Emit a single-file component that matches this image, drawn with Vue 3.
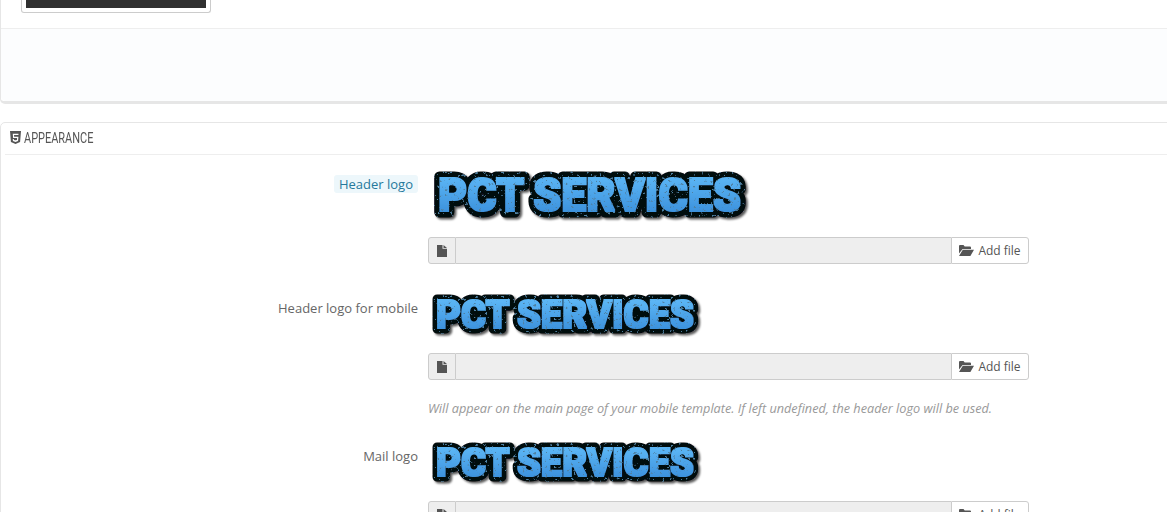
<script setup>
const rows = [
  { label: 'Header logo', active: true, w: 330, h: 56, font: 47, tx: 10, tw: 303, base: 42, sw: 11, help: '' },
  { label: 'Header logo for mobile', active: false, w: 280, h: 48, font: 38, tx: 8, tw: 258, base: 35, sw: 9, help: 'Will appear on the main page of your mobile template. If left undefined, the header logo will be used.' },
  { label: 'Mail logo', active: false, w: 281, h: 48, font: 38, tx: 8, tw: 258, base: 35, sw: 9, help: '' }
]
</script>

<template>
  <div class="page">
    <section class="panel first">
      <div class="body-top">
        <div class="thumb"><div class="thumb-img"></div></div>
      </div>
      <div class="panel-foot"></div>
    </section>
    <section class="panel second">
      <h3 class="heading">
        <svg class="h5" viewBox="0 0 12 14" aria-hidden="true">
          <path fill-rule="evenodd" d="M0 0h12l-1 11.800L6 14l-5-2.200zM3 3l.4 4.600h4.300l-.1 2L6 10.100l-1.700-.5-.1-1H3l.2 2.300 2.800.9 2.800-.9.4-4.700H4.500l-.1-1.800h4.800L9.300 3z" />
        </svg>
        <span class="heading-text">APPEARANCE</span>
      </h3>
      <div class="form">
        <div v-for="r in rows" :key="r.label" class="row">
          <div class="label-col"><span class="label" :class="{ active: r.active }">{{ r.label }}</span></div>
          <div class="field">
            <svg class="logo" :width="r.w" :height="r.h" :viewBox="`0 0 ${r.w} ${r.h}`">
              <defs>
                <linearGradient :id="`g${r.w}`" x1="0" y1="0" x2="0" y2="1">
                  <stop offset="0.15" stop-color="#5cb6f5" />
                  <stop offset="0.85" stop-color="#3a8fdb" />
                </linearGradient>
                <filter :id="`f${r.w}`" x="-5%" y="-20%" width="110%" height="140%">
                  <feMorphology in="SourceGraphic" operator="dilate" radius="1 0.6" result="fat" />
                  <feTurbulence type="fractalNoise" baseFrequency="0.35" numOctaves="3" seed="7" result="n" />
                  <feColorMatrix in="n" type="matrix" values="0 0 0 0 0.08  0 0 0 0 0.22  0 0 0 0 0.36  0 0 0 10 -6.600" result="sp" />
                  <feComposite in="sp" in2="fat" operator="in" result="spc" />
                  <feMerge result="art"><feMergeNode in="fat" /><feMergeNode in="spc" /></feMerge>
                  <feGaussianBlur in="art" stdDeviation="0.4" result="soft" />
                  <feDropShadow in="soft" dx="2" dy="2" stdDeviation="1.200" flood-color="#000" flood-opacity="0.65" />
                </filter>
              </defs>
              <text
                class="logo-text"
                :x="r.tx"
                :y="r.base"
                :font-size="r.font"
                :stroke-width="r.sw"
                :textLength="r.tw"
                lengthAdjust="spacingAndGlyphs"
                word-spacing="-1"
                :fill="`url(#g${r.w})`"
                :filter="`url(#f${r.w})`"
              >PCT SERVICES</text>
            </svg>
            <div class="upload">
              <div class="addon">
                <svg class="ico-file" viewBox="0 0 10 12" aria-hidden="true"><path d="M0 0h5.500v3.800H10V12H0zM6.500 0 10 2.900H6.500z" /></svg>
              </div>
              <div class="input"></div>
              <button class="btn" type="button">
                <svg class="ico-folder" viewBox="0 0 15 11" aria-hidden="true"><path d="M0 1a1 1 0 0 1 1-1h3.500l1.200 1.500H11a1 1 0 0 1 1 1V4H3.600L0 8.600zM3.800 4.800H15l-3.600 6.200H0z" /></svg>
                Add file
              </button>
            </div>
            <p v-if="r.help" class="help">{{ r.help }}</p>
          </div>
        </div>
      </div>
    </section>
  </div>
</template>

<style>
html, body { margin: 0; height: 512px; overflow: hidden; background: #fff; }
</style>

<style scoped>
.page {
  width: 1167px;
  height: 512px;
  overflow: hidden;
  font-family: "Open Sans", sans-serif;
  font-size: 13px;
  color: #666;
}
.panel {
  width: 1190px;
  background: #fff;
  border: 1px solid #e6e6e6;
  border-radius: 5px;
  box-sizing: border-box;
}
.first {
  height: 104px;
  border-top: none;
  border-radius: 0 0 5px 5px;
  border-bottom: 3px solid #e6e6e6;
  display: flex;
  flex-direction: column;
}
.body-top { height: 28px; padding-left: 20px; box-sizing: border-box; }
.thumb {
  width: 190px;
  height: 13px;
  box-sizing: border-box;
  padding: 0 4px;
  background: #fff;
  border: 1px solid #ccc;
  border-top: none;
  border-radius: 0 0 3px 3px;
}
.thumb-img { height: 8px; background: #303030; }
.panel-foot {
  flex: 1;
  background: #fcfdfe;
  border-top: 1px solid #eee;
  border-radius: 0 0 5px 5px;
}
.second { margin-top: 18px; height: 460px; }
.heading {
  margin: 0 0 0 4px;
  height: 32px;
  display: flex;
  align-items: center;
  gap: 3px;
  padding: 0 0 2px 5px;
  box-sizing: border-box;
  border-bottom: 1px solid #eee;
  font-family: Roboto, "Liberation Sans", sans-serif;
  font-weight: 400;
  font-size: 15px;
  color: #555;
}
.heading-text { display: inline-block; transform: scaleX(0.73); transform-origin: left center; }
.h5 { width: 11px; height: 13px; fill: #555; }
.form { padding-top: 14px; }
.row { display: flex; }
.label-col {
  width: 417px;
  flex: none;
  text-align: right;
  padding-top: 6px;
  height: 24px;
  box-sizing: border-box;
}
.label { display: inline-block; line-height: 18px; color: #666; }
.label.active { padding: 0 5px; background: #edf7fb; color: #25799c; border-radius: 3px; }
.field { margin-left: 10px; width: 601px; }
.logo { display: block; overflow: visible; }
.logo-text {
  font-family: Roboto, "Liberation Sans", sans-serif;
  font-weight: 900;
  stroke: #05070a;
  stroke-linejoin: round;
  paint-order: stroke fill;
}
.upload { display: flex; height: 27px; margin-top: 12px; }
.addon {
  width: 28px;
  box-sizing: border-box;
  display: flex;
  align-items: center;
  justify-content: center;
  background: #eee;
  border: 1px solid #ccc;
  border-radius: 3px 0 0 3px;
}
.ico-file { width: 10px; height: 12px; fill: #555; }
.input {
  flex: 1;
  background: #eee;
  border-top: 1px solid #ccc;
  border-bottom: 1px solid #ccc;
}
.btn {
  width: 78px;
  display: flex;
  align-items: center;
  justify-content: center;
  gap: 4px;
  padding: 0;
  background: #fff;
  border: 1px solid #ccc;
  border-radius: 0 3px 3px 0;
  font: inherit;
  font-size: 12px;
  color: #555;
}
.ico-folder { width: 15px; height: 11px; fill: #555; }
.help {
  margin: 20px 0 0;
  font-size: 12.7px;
  font-style: italic;
  line-height: 16px;
  color: #999;
}
.row:nth-child(1) { height: 124px; }
.row:nth-child(2) { height: 148px; }
</style>
